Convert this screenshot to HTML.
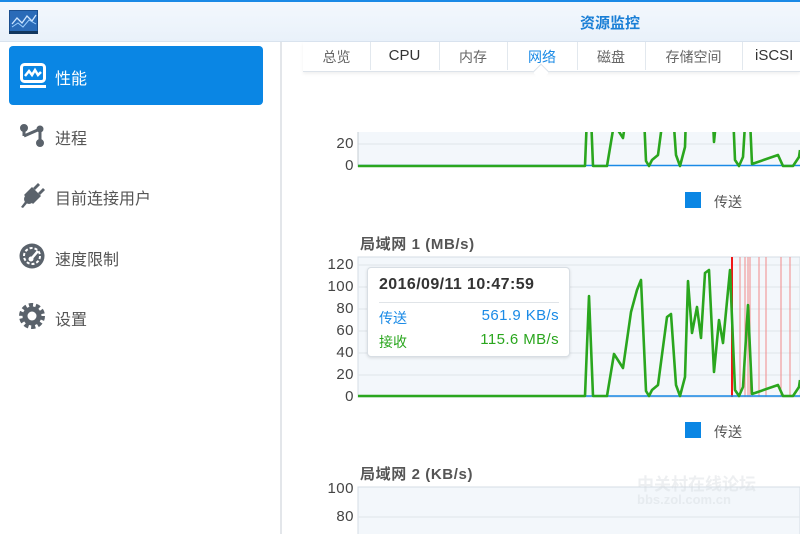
<!DOCTYPE html>
<html><head><meta charset="utf-8"><style>
*{margin:0;padding:0;box-sizing:border-box}
body{width:800px;height:534px;overflow:hidden;background:#fff;font-family:"Liberation Sans","Noto Sans CJK SC",sans-serif;position:relative}
#hdr{position:absolute;left:0;top:0;width:800px;height:42px;border-top:2px solid #1a8ae6;background:linear-gradient(#f3f8fd,#e9f1fa);border-bottom:1px solid #d9e3ee}
#title{position:absolute;left:560px;top:10px;width:100px;text-align:center;color:#1a7fd6;font-size:15px;font-weight:bold}
#side{position:absolute;left:0;top:42px;width:282px;height:492px;border-right:2px solid #e3e6ea;background:#fff}
.it{position:absolute;left:55px;font-size:16px;color:#555}
#act{position:absolute;left:9px;top:46px;width:254px;height:59px;background:#0a86e4;border-radius:4px}
.tabs{position:absolute;left:303px;top:42px;width:497px;height:30px;border-bottom:1px solid #dde3ea;box-shadow:0 2px 3px rgba(0,0,0,.06)}
.tab{position:absolute;top:5px;font-size:14px;color:#666;text-align:center}
.sep{position:absolute;top:0;width:1px;height:28px;background:#e2e8ee}
.lbl{position:absolute;font-size:15px;color:#444;text-align:right;width:41px;letter-spacing:.5px}
.ct{position:absolute;font-size:15px;color:#555;font-weight:bold;letter-spacing:.6px}
</style></head><body>
<div id="hdr">
<svg style="position:absolute;left:9px;top:8px" width="29" height="24"><rect width="29" height="24" fill="#1b4f8f"/><rect x="1" y="1" width="27" height="20" fill="#2a6bb8"/><polyline points="3,14 8,8 13,13 18,6 23,11 27,5" fill="none" stroke="#cfe6ff" stroke-width="1.3"/><polyline points="3,17 9,13 14,17 20,10 27,14" fill="none" stroke="#9fd0ff" stroke-width="1"/><rect y="21" width="29" height="3" fill="#12375f"/></svg>
<div id="title">资源监控</div></div>
<div id="side"></div>
<div id="act"></div>
<svg style="position:absolute;left:20px;top:63px" width="26" height="26"><rect x="1.5" y="1.5" width="23" height="17" rx="3" fill="none" stroke="#fff" stroke-width="3"/><polyline points="5,13 9,8 12,12 15,7 18,12 21,9" fill="none" stroke="#fff" stroke-width="2.5"/><rect x="0" y="22" width="26" height="3" fill="#fff"/></svg>
<div class="it" style="top:65px;color:#fff">性能</div>
<svg style="position:absolute;left:20px;top:124px" width="24" height="24" fill="#5a626b" stroke="#5a626b"><line x1="4" y1="4" x2="4" y2="12" stroke-width="3"/><line x1="4" y1="12" x2="20" y2="5" stroke-width="3"/><line x1="20" y1="5" x2="20" y2="19" stroke-width="3"/><circle cx="4" cy="4" r="3.5"/><circle cx="20" cy="5" r="3"/><circle cx="20" cy="19" r="3.5"/></svg>
<div class="it" style="top:125px">进程</div>
<svg style="position:absolute;left:19px;top:183px" width="26" height="26" fill="#5a626b"><path d="M14 5 L19 0 L21 2 L16 7Z M19 10 L24 5 L26 7 L21 12Z"/><path d="M8 16 L2 24 L4 25 L10 18Z"/><path d="M5 12 L13 4 L22 13 L14 21 Z"/><circle cx="10" cy="16" r="5"/></svg>
<div class="it" style="top:185px">目前连接用户</div>
<svg style="position:absolute;left:19px;top:243px" width="26" height="26"><circle cx="13" cy="13" r="12.5" fill="#5a626b"/><circle cx="13" cy="13" r="8" fill="none" stroke="#fff" stroke-width="2" stroke-dasharray="3 2"/><line x1="13" y1="15" x2="19" y2="8" stroke="#fff" stroke-width="2.5"/><circle cx="12" cy="16" r="2.5" fill="#fff"/></svg>
<div class="it" style="top:246px">速度限制</div>
<svg style="position:absolute;left:19px;top:303px" width="26" height="26"><circle cx="13" cy="13" r="10.5" fill="none" stroke="#5a626b" stroke-width="5" stroke-dasharray="4 2.6"/><circle cx="13" cy="13" r="9.5" fill="#5a626b"/><circle cx="13" cy="13" r="4.5" fill="#fff"/></svg>
<div class="it" style="top:306px">设置</div>

<div class="tabs">
<div class="tab" style="left:0;width:67px">总览</div><div class="sep" style="left:67px"></div>
<div class="tab" style="left:67px;width:69px;color:#333;font-size:15px">CPU</div><div class="sep" style="left:136px"></div>
<div class="tab" style="left:136px;width:68px">内存</div><div class="sep" style="left:204px"></div>
<div class="tab" style="left:204px;width:70px;color:#1a8ae6">网络</div><div class="sep" style="left:274px"></div>
<div class="tab" style="left:274px;width:68px">磁盘</div><div class="sep" style="left:342px"></div>
<div class="tab" style="left:342px;width:97px">存储空间</div><div class="sep" style="left:439px"></div>
<div class="tab" style="left:452px;color:#333;font-size:15px">iSCSI</div>
</div>
<div style="position:absolute;left:535px;top:66px;width:12px;height:12px;background:#fff;border-left:1px solid #dde3ea;border-top:1px solid #dde3ea;transform:rotate(45deg)"></div>

<svg style="position:absolute;left:0;top:0" width="800" height="534">
<defs><clipPath id="c1"><rect x="358" y="132" width="442" height="36"/></clipPath><clipPath id="c2"><rect x="358" y="257" width="442" height="142"/></clipPath>
<polyline id="g" points="358,396 585,396 589,296 593,396 607,396 614,354 623,368 631,312 637,290 641,280 646,391 649,396 652,390 658,385 667,317 671,314 676,385 680,396 685,377 688,281 692,333 697,307 701,338 705,273 709,270 714,372 719,320 723,343 730,270 735,390 739,396 743,387 748,305 752,394 778,385 783,396 793,396 799,387 800,380" fill="none" stroke="#2aa61e" stroke-width="2.6" stroke-linejoin="round"/></defs>
<rect x="358" y="132" width="442" height="34" fill="#f3f7fb"/>
<line x1="358" y1="144" x2="800" y2="144" stroke="#dfe5ea"/>
<line x1="358" y1="132" x2="358" y2="167" stroke="#c5ccd3"/>
<g clip-path="url(#c1)"><line x1="358" y1="165.5" x2="800" y2="165.5" stroke="#1a8ae6" stroke-width="1.5"/><use href="#g" transform="translate(0,-230)"/></g>
<rect x="358" y="257" width="442" height="140" fill="#f3f7fb" stroke="#d5dde5"/>
<g stroke="#dfe5ea"><line x1="358" y1="265" x2="800" y2="265"/><line x1="358" y1="287" x2="800" y2="287"/><line x1="358" y1="309" x2="800" y2="309"/><line x1="358" y1="331" x2="800" y2="331"/><line x1="358" y1="353" x2="800" y2="353"/><line x1="358" y1="375" x2="800" y2="375"/></g>
<g stroke="#f28a8a" stroke-width="1"><line x1="740" y1="257" x2="740" y2="397"/><line x1="745" y1="257" x2="745" y2="397"/><line x1="748" y1="257" x2="748" y2="397"/><line x1="750" y1="257" x2="750" y2="397"/><line x1="759" y1="257" x2="759" y2="397"/><line x1="766" y1="257" x2="766" y2="397"/><line x1="781" y1="257" x2="781" y2="397"/><line x1="790" y1="257" x2="790" y2="397"/></g>
<line x1="732" y1="257" x2="732" y2="397" stroke="#f01818" stroke-width="2"/>
<g clip-path="url(#c2)"><line x1="358" y1="396" x2="800" y2="396" stroke="#1a8ae6" stroke-width="1.5"/><use href="#g"/></g>
<rect x="358" y="487" width="442" height="50" fill="#f3f7fb" stroke="#d5dde5"/>
<line x1="358" y1="517" x2="800" y2="517" stroke="#dfe5ea"/>
<rect x="685" y="192" width="16" height="16" fill="#0a86e4"/>
<rect x="685" y="422" width="16" height="16" fill="#0a86e4"/>
</svg>
<div style="position:absolute;left:714px;top:192px;font-size:14px;color:#555">传送</div>
<div style="position:absolute;left:714px;top:422px;font-size:14px;color:#555">传送</div>
<div class="lbl" style="left:313px;top:135px">20</div><div class="lbl" style="left:313px;top:157px">0</div>
<div class="ct" style="left:360px;top:233px">局域网 1 (MB/s)</div>
<div class="lbl" style="left:313px;top:256px">120</div><div class="lbl" style="left:313px;top:278px">100</div><div class="lbl" style="left:313px;top:300px">80</div><div class="lbl" style="left:313px;top:322px">60</div><div class="lbl" style="left:313px;top:344px">40</div><div class="lbl" style="left:313px;top:366px">20</div><div class="lbl" style="left:313px;top:388px">0</div>
<div class="ct" style="left:360px;top:463px">局域网 2 (KB/s)</div>
<div class="lbl" style="left:313px;top:480px">100</div><div class="lbl" style="left:313px;top:508px">80</div>
<div style="position:absolute;left:367px;top:267px;width:203px;height:90px;background:#fff;border:1px solid #d8dee4;border-radius:4px;box-shadow:0 1px 3px rgba(0,0,0,.12)">
<div style="position:absolute;left:11px;top:8px;font-size:16px;font-weight:bold;color:#333;letter-spacing:.4px">2016/09/11 10:47:59</div>
<div style="position:absolute;left:11px;top:34px;width:180px;height:1px;background:#e0e4e8"></div>
<div style="position:absolute;left:11px;top:40px;font-size:14px;color:#1a8ae6">传送</div><div style="position:absolute;right:10px;top:39px;font-size:15px;color:#1a8ae6;letter-spacing:.4px">561.9 KB/s</div>
<div style="position:absolute;left:11px;top:64px;font-size:14px;color:#2aa61e">接收</div><div style="position:absolute;right:10px;top:63px;font-size:15px;color:#2aa61e;letter-spacing:.4px">115.6 MB/s</div>
</div>
<div style="position:absolute;left:637px;top:470px;font-size:17px;font-weight:bold;color:rgba(215,220,225,.45)">中关村在线论坛</div>
<div style="position:absolute;left:637px;top:492px;font-size:13px;font-weight:bold;color:rgba(215,220,225,.45)">bbs.zol.com.cn</div>
</body></html>
